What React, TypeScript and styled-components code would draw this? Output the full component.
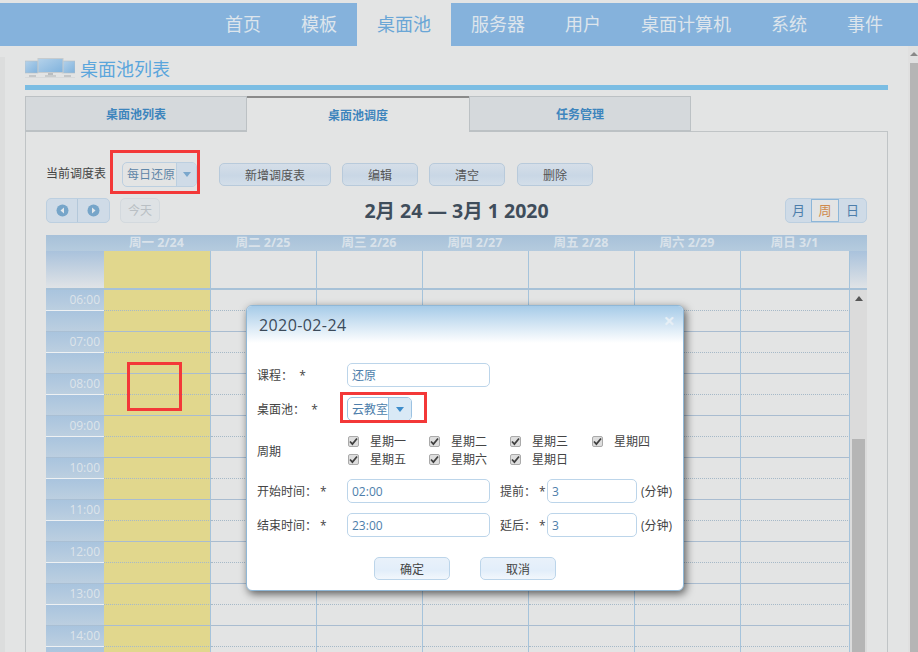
import React from "react";
import styled, { createGlobalStyle } from "styled-components";

const GlobalStyle = createGlobalStyle`
  html, body {
    margin: 0;
    padding: 0;
    background: #e3e4e4;
    font-family: "Open Sans", "Noto Sans CJK SC", sans-serif;
    font-size: 12px;
  }
  * {
    box-sizing: border-box;
  }
`;

const navItems = ["首页", "模板", "桌面池", "服务器", "用户", "桌面计算机", "系统", "事件"];
const days = ["周一 2/24", "周二 2/25", "周三 2/26", "周四 2/27", "周五 2/28", "周六 2/29", "周日 3/1"];
const hours = ["06:00", "07:00", "08:00", "09:00", "10:00", "11:00", "12:00", "13:00", "14:00"];
const weekdays = [
  ["星期一", "星期二", "星期三", "星期四"],
  ["星期五", "星期六", "星期日"],
];

const MonitorIcon = () => (
  <svg width="50" height="20" viewBox="0 0 50 20">
    <defs>
      <linearGradient id="screen" x1="0" y1="0" x2="1" y2="1">
        <stop offset="0" stopColor="#b5d2ea" />
        <stop offset="1" stopColor="#7fb2dd" />
      </linearGradient>
    </defs>
    <rect x="0" y="3" width="13" height="12" fill="url(#screen)" stroke="#b9bfc4" strokeWidth="0.6" />
    <rect x="37" y="3" width="13" height="12" fill="url(#screen)" stroke="#b9bfc4" strokeWidth="0.6" />
    <rect x="4" y="17" width="7" height="2" fill="#c4c7c9" />
    <rect x="39" y="17" width="7" height="2" fill="#c4c7c9" />
    <rect x="13" y="0.5" width="25" height="14" fill="url(#screen)" stroke="#c6cbce" />
    <rect x="23" y="15" width="5" height="2" fill="#b9bdc0" />
    <rect x="20" y="17" width="11" height="2" fill="#c9cccd" />
    <rect x="0" y="19" width="50" height="1" fill="#d8dadb" />
  </svg>
);

const ArrowCircle = ({ left }: { left?: boolean }) => (
  <svg width="13" height="13" viewBox="0 0 13 13">
    <circle cx="6.5" cy="6.5" r="6" fill="#76a5c9" />
    <path d={left ? "M8 3.5v6L4.5 6.5z" : "M5 3.5v6l3.5-3z"} fill="#e3e8ec" />
  </svg>
);

const CheckMark = () => (
  <svg width="9" height="9" viewBox="0 0 9 9">
    <path d="M1 4.5l2.4 2.6L8 1.5" fill="none" stroke="#3f3f3f" strokeWidth="1.7" />
  </svg>
);

const App = (): JSX.Element => {
  return (
    <>
      <GlobalStyle />
      <Page>
        <TopNav>
          {navItems.map((item) => (
            <NavItem key={item} $active={item === "桌面池"}>
              {item}
            </NavItem>
          ))}
        </TopNav>
        <Body>
          <EdgeStrip />
          <Content>
            <TitleRow>
              <MonitorIcon />
              <PageTitle>桌面池列表</PageTitle>
            </TitleRow>
            <BlueRule />
            <Tabs>
              <Tab>桌面池列表</Tab>
              <Tab $active>桌面池调度</Tab>
              <Tab>任务管理</Tab>
            </Tabs>
            <Panel>
              <Toolbar>
                <ToolbarLabel>当前调度表</ToolbarLabel>
                <PlanSelect>
                  <PlanValue>每日还原</PlanValue>
                  <PlanArrow>
                    <Caret $color="#7aa7cc" />
                  </PlanArrow>
                </PlanSelect>
                <ToolButton $width={112} $gap={22}>新增调度表</ToolButton>
                <ToolButton $width={76} $gap={11}>编辑</ToolButton>
                <ToolButton $width={76} $gap={11}>清空</ToolButton>
                <ToolButton $width={76} $gap={12}>删除</ToolButton>
              </Toolbar>
              <CalendarBar>
                <BarSide>
                  <ButtonGroup>
                    <NavSquare>
                      <ArrowCircle left />
                    </NavSquare>
                    <NavSquare $last>
                      <ArrowCircle />
                    </NavSquare>
                  </ButtonGroup>
                  <TodayButton>今天</TodayButton>
                </BarSide>
                <RangeTitle>2月 24 — 3月 1 2020</RangeTitle>
                <BarSide $right>
                  <ButtonGroup>
                    <ViewButton $width={25}>月</ViewButton>
                    <ViewButton $width={28} $active>周</ViewButton>
                    <ViewButton $width={27}>日</ViewButton>
                  </ButtonGroup>
                </BarSide>
              </CalendarBar>
              <Calendar>
                <HeaderRow>
                  <span />
                  {days.map((day) => (
                    <HeaderCell key={day}>{day}</HeaderCell>
                  ))}
                  <span />
                </HeaderRow>
                <AllDayRow>
                  <AllDayAxis />
                  {days.map((day, i) => (
                    <AllDayCell key={day} $highlight={i === 0} />
                  ))}
                  <AllDayAxis />
                </AllDayRow>
                <SlotsArea>
                  <Slots>
                    {hours.map((hour) => (
                      <React.Fragment key={hour}>
                        <AxisCell $half>
                          <AxisTime>{hour}</AxisTime>
                        </AxisCell>
                        {days.map((day, i) => (
                          <SlotCell key={day} $highlight={i === 0} $half />
                        ))}
                        <AxisCell />
                        {days.map((day, i) => (
                          <SlotCell key={day} $highlight={i === 0} />
                        ))}
                      </React.Fragment>
                    ))}
                  </Slots>
                  <CalendarScroll>
                    <ScrollUp />
                    <ScrollThumb />
                  </CalendarScroll>
                </SlotsArea>
              </Calendar>
            </Panel>
          </Content>
          <PageScroll>
            <PageScrollUp />
            <PageScrollThumb />
          </PageScroll>
        </Body>

        <Modal>
          <ModalHeader>
            <ModalTitle>2020-02-24</ModalTitle>
            <ModalClose>×</ModalClose>
          </ModalHeader>
          <ModalBody>
            <FormRow>
              <FieldLabel>课程：  *</FieldLabel>
              <TextField $width={143} value="还原" readOnly />
            </FormRow>
            <FormRow $top={10}>
              <FieldLabel>桌面池：  *</FieldLabel>
              <PoolSelect>
                <PoolValue>云教室</PoolValue>
                <PoolArrow>
                  <Caret $color="#3c8ccb" />
                </PoolArrow>
              </PoolSelect>
            </FormRow>
            <CycleRow>
              <CycleLabel>周期</CycleLabel>
              <CycleList>
                {weekdays.map((line) => (
                  <CycleLine key={line[0]}>
                    {line.map((day) => (
                      <CycleItem key={day} $wide={day === "星期三"}>
                        <CheckBox>
                          <CheckMark />
                        </CheckBox>
                        {day}
                      </CycleItem>
                    ))}
                  </CycleLine>
                ))}
              </CycleList>
            </CycleRow>
            <FormRow $top={11}>
              <FieldLabel>开始时间： *</FieldLabel>
              <TextField $width={143} value="02:00" readOnly />
              <SideLabel>提前： *</SideLabel>
              <TextField $width={90} value="3" readOnly />
              <UnitLabel>(分钟)</UnitLabel>
            </FormRow>
            <FormRow $top={10}>
              <FieldLabel>结束时间： *</FieldLabel>
              <TextField $width={143} value="23:00" readOnly />
              <SideLabel>延后： *</SideLabel>
              <TextField $width={90} value="3" readOnly />
              <UnitLabel>(分钟)</UnitLabel>
            </FormRow>
            <ModalActions>
              <ActionButton>确定</ActionButton>
              <ActionButton>取消</ActionButton>
            </ModalActions>
          </ModalBody>
        </Modal>

        <Marker $x={110} $y={150} $w={90} $h={44} />
        <Marker $x={127} $y={362} $w={55} $h={49} />
        <Marker $x={340} $y={392} $w={87} $h={31} />
      </Page>
    </>
  );
};

export default App;

const Page = styled.div`
  position: relative;
  width: 918px;
  height: 652px;
  overflow: hidden;
  background: #e3e4e4;
  padding-top: 3px;
  border-top: 0;
`;

const TopNav = styled.nav`
  display: flex;
  justify-content: flex-end;
  height: 43px;
  padding-right: 15px;
  background: #85b2dc;
`;

const NavItem = styled.div<{ $active?: boolean }>`
  padding: 0 20px;
  font-size: 18px;
  line-height: 43px;
  color: ${(props) => (props.$active ? "#6aa6d6" : "#dde5ec")};
  background: ${(props) => (props.$active ? "#e3e4e4" : "transparent")};
`;

const Body = styled.div`
  display: flex;
`;

const EdgeStrip = styled.div`
  width: 5px;
  height: 600px;
  margin-top: 11px;
  background: #dcdddd;
`;

const Content = styled.div`
  width: 863px;
  margin-left: 20px;
`;

const TitleRow = styled.div`
  display: flex;
  align-items: center;
  gap: 5px;
  height: 39px;
  padding-top: 4px;
`;

const PageTitle = styled.h1`
  margin: 0;
  font-size: 18px;
  font-weight: 400;
  color: #5ba6dc;
`;

const BlueRule = styled.div`
  height: 5px;
  background: #7bbde3;
`;

const Tabs = styled.div`
  display: flex;
  margin-top: 6px;
  height: 36px;
`;

const Tab = styled.div<{ $active?: boolean }>`
  width: 222px;
  height: 36px;
  text-align: center;
  line-height: 36px;
  font-weight: 700;
  font-size: 12px;
  color: #3d85bd;
  background: ${(props) => (props.$active ? "#e3e4e4" : "#d5d9dc")};
  border: 1px solid #bcc1c4;
  border-width: ${(props) => (props.$active ? "2px 0 0 0" : "1px 1px 2px 1px")};
  border-top-color: ${(props) => (props.$active ? "#8a8a8a" : "#bcc1c4")};
  position: relative;
  z-index: 1;
`;

const Panel = styled.div`
  margin-top: -1px;
  height: 540px;
  padding: 30px 20px 0;
  border: 1px solid #c0c4c6;
`;

const Toolbar = styled.div`
  display: flex;
  align-items: center;
  height: 25px;
`;

const ToolbarLabel = styled.span`
  width: 76px;
  margin-top: -3px;
  font-size: 12px;
  color: #444;
`;

const PlanSelect = styled.div`
  display: flex;
  width: 75px;
  height: 25px;
  border: 1px solid #bccfe0;
  border-radius: 5px;
  overflow: hidden;
`;

const PlanValue = styled.span`
  width: 53px;
  padding-left: 4px;
  line-height: 24px;
  font-size: 12px;
  color: #5f86a8;
  white-space: nowrap;
`;

const PlanArrow = styled.span`
  flex: 1;
  display: flex;
  align-items: center;
  justify-content: center;
  background: #cfdbe7;
  border-left: 1px solid #bccfe0;
`;

const Caret = styled.i<{ $color: string }>`
  width: 0;
  height: 0;
  border-left: 4px solid transparent;
  border-right: 4px solid transparent;
  border-top: 5px solid ${(props) => props.$color};
`;

const ToolButton = styled.button<{ $width: number; $gap: number }>`
  width: ${(props) => props.$width}px;
  height: 23px;
  margin-left: ${(props) => props.$gap}px;
  padding: 1px 0 0;
  font: inherit;
  font-size: 12px;
  color: #555;
  border: 1px solid #b8cadb;
  border-radius: 5px;
  background: linear-gradient(#d5dee8, #c9d7e5 55%, #d3dee9);
`;

const CalendarBar = styled.div`
  display: grid;
  grid-template-columns: 1fr auto 1fr;
  grid-template-rows: 25px;
  align-items: center;
  height: 25px;
  margin-top: 11px;
`;

const BarSide = styled.div<{ $right?: boolean }>`
  display: flex;
  gap: 10px;
  justify-content: ${(props) => (props.$right ? "flex-end" : "flex-start")};
`;

const ButtonGroup = styled.div`
  display: flex;
  height: 25px;
  border: 1px solid #bccfe0;
  border-radius: 5px;
  background: #cfdbe7;
  overflow: hidden;
`;

const NavSquare = styled.span<{ $last?: boolean }>`
  display: flex;
  align-items: center;
  justify-content: center;
  width: 31px;
  border-right: ${(props) => (props.$last ? "0" : "1px solid #b4c8da")};
`;

const TodayButton = styled.span`
  width: 40px;
  height: 25px;
  line-height: 23px;
  text-align: center;
  font-size: 12px;
  color: #b9bfc4;
  background: #dee2e5;
  border: 1px solid #d3d9de;
  border-radius: 5px;
`;

const RangeTitle = styled.h2`
  margin: 0;
  font-size: 19.5px;
  line-height: 25px;
  font-weight: 700;
  color: #3f4d5b;
  white-space: nowrap;
`;

const ViewButton = styled.span<{ $width: number; $active?: boolean }>`
  width: ${(props) => props.$width}px;
  text-align: center;
  line-height: 23px;
  font-size: 13px;
  color: ${(props) => (props.$active ? "#cf8a4c" : "#4d7eab")};
  background: ${(props) => (props.$active ? "#e3e4e4" : "transparent")};
  box-shadow: ${(props) => (props.$active ? "inset 0 0 0 1px #8db6d8" : "none")};
`;

const Calendar = styled.div`
  margin-top: 12px;
  width: 821px;
`;

const dayColumns = "107px repeat(5, 106px) 109px";

const HeaderRow = styled.div`
  display: grid;
  grid-template-columns: 58px ${dayColumns} 17px;
  height: 16px;
  background: linear-gradient(#a7c1d9, #b5cbde);
`;

const HeaderCell = styled.div`
  padding-right: 2px;
  text-align: center;
  font-size: 12.5px;
  font-weight: 700;
  line-height: 16px;
  color: #d9e2ea;
`;

const AllDayRow = styled.div`
  display: grid;
  grid-template-columns: 58px ${dayColumns} 17px;
  height: 39px;
  border-bottom: 2px solid #a7c1d7;
`;

const AllDayAxis = styled.div`
  background: linear-gradient(#a9c2dc, #e0e3e6);
`;

const AllDayCell = styled.div<{ $highlight?: boolean }>`
  background: ${(props) => (props.$highlight ? "#e1d78d" : "#e3e4e4")};
  border-right: 1px solid #a5c3db;
`;

const SlotsArea = styled.div`
  display: flex;
`;

const Slots = styled.div`
  display: grid;
  grid-template-columns: 58px ${dayColumns};
  grid-auto-rows: 21px;
  width: 804px;
`;

const AxisCell = styled.div<{ $half?: boolean }>`
  display: flex;
  align-items: center;
  justify-content: flex-end;
  padding: 0 4px 2px 0;
  background: linear-gradient(#a9c4de, #bccfe0);
  border-bottom: 1px solid ${(props) => (props.$half ? "#eef1f3" : "#a9bfd4")};
`;

const AxisTime = styled.span`
  font-size: 12px;
  color: #dde4ea;
`;

const SlotCell = styled.div<{ $highlight?: boolean; $half?: boolean }>`
  background: ${(props) => (props.$highlight ? "#e1d78d" : "#e3e4e4")};
  border-right: 1px solid #a5c3db;
  border-bottom: 1px ${(props) => (props.$half ? "dotted #a6b9c8" : "solid #a9bcd0")};
`;

const CalendarScroll = styled.div`
  width: 17px;
  padding: 0 2px;
  background: #dbdbdb;
`;

const ScrollUp = styled.div`
  width: 0;
  height: 0;
  margin: 6px auto 0;
  border-left: 4px solid transparent;
  border-right: 4px solid transparent;
  border-bottom: 5px solid #555;
`;

const ScrollThumb = styled.div`
  height: 240px;
  margin-top: 138px;
  background: #b5b5b5;
`;

const PageScroll = styled.div`
  width: 10px;
  margin-left: 20px;
  height: 606px;
  padding-left: 2px;
  background: #e0e0e0;
`;

const PageScrollUp = styled.div`
  width: 0;
  height: 0;
  margin: 6px 0 0 0;
  border-left: 4px solid transparent;
  border-right: 4px solid transparent;
  border-bottom: 4px solid #888;
`;

const PageScrollThumb = styled.div`
  height: 600px;
  margin-top: 7px;
  background: #b5b5b5;
`;

const Modal = styled.div`
  position: absolute;
  left: 246px;
  top: 305px;
  width: 438px;
  height: 286px;
  border: 1px solid #8fb7d6;
  border-radius: 6px;
  background: #fff;
  box-shadow: 2px 3px 8px rgba(0, 0, 0, 0.6);
  overflow: hidden;
`;

const ModalHeader = styled.div`
  display: flex;
  align-items: center;
  justify-content: space-between;
  height: 37px;
  padding: 0 8px 0 12px;
  background: linear-gradient(#a6cbe8, #fff);
`;

const ModalTitle = styled.h3`
  margin: 0;
  font-size: 16px;
  font-weight: 400;
  letter-spacing: 0.4px;
  color: #3b4a5a;
`;

const ModalClose = styled.span`
  font-size: 20px;
  font-weight: 700;
  line-height: 20px;
  margin-top: -8px;
  color: #e6eff6;
`;

const ModalBody = styled.div`
  padding: 20px 0 0 10px;
`;

const FormRow = styled.div<{ $top?: number }>`
  display: flex;
  align-items: center;
  height: 24px;
  margin-top: ${(props) => props.$top ?? 0}px;
`;

const FieldLabel = styled.label`
  width: 90px;
  font-size: 12px;
  white-space: pre;
  color: #444;
`;

const CycleLabel = styled(FieldLabel)`
  margin-top: 2px;
`;

const TextField = styled.input<{ $width: number }>`
  width: ${(props) => props.$width}px;
  height: 24px;
  padding: 0 4px;
  font: inherit;
  font-size: 12px;
  color: #4d7eab;
  border: 1px solid #bcd5ea;
  border-radius: 5px;
  outline: none;
`;

const SideLabel = styled.label`
  width: 47px;
  margin-left: 10px;
  font-size: 12px;
  white-space: pre;
  color: #444;
`;

const UnitLabel = styled.span`
  margin-left: 4px;
  font-size: 12px;
  color: #444;
`;

const PoolSelect = styled.div`
  display: flex;
  width: 65px;
  height: 24px;
  border: 1px solid #9cc2e2;
  border-radius: 5px;
  overflow: hidden;
`;

const PoolValue = styled.span`
  width: 40px;
  padding-left: 4px;
  line-height: 24px;
  font-size: 12px;
  color: #4d7eab;
  white-space: nowrap;
  overflow: hidden;
`;

const PoolArrow = styled.span`
  flex: 1;
  display: flex;
  align-items: center;
  justify-content: center;
  background: #d9e9f6;
  border-left: 1px solid #9cc2e2;
`;

const CycleRow = styled.div`
  display: flex;
  align-items: center;
  margin-top: 11px;
`;

const CycleList = styled.div`
  display: flex;
  flex-direction: column;
`;

const CycleLine = styled.div`
  display: flex;
  height: 18px;
`;

const CycleItem = styled.div<{ $wide?: boolean }>`
  display: flex;
  align-items: center;
  width: ${(props) => (props.$wide ? "82px" : "81px")};
  padding-left: 1px;
  font-size: 12px;
  color: #444;
`;

const CheckBox = styled.span`
  display: flex;
  align-items: center;
  justify-content: center;
  width: 11px;
  height: 11px;
  margin-right: 11px;
  background: #dedede;
  border: 1px solid #aaa;
  border-radius: 2px;
`;

const ModalActions = styled.div`
  display: flex;
  gap: 30px;
  margin-top: 20px;
  padding-left: 117px;
`;

const ActionButton = styled.button`
  width: 76px;
  height: 23px;
  padding: 0;
  font: inherit;
  font-size: 12px;
  color: #444;
  border: 1px solid #bcd5ea;
  border-radius: 5px;
  background: linear-gradient(#e9f1fa, #e2eefa 60%, #f2f7fc);
`;

const Marker = styled.div<{ $x: number; $y: number; $w: number; $h: number }>`
  position: absolute;
  left: ${(props) => props.$x}px;
  top: ${(props) => props.$y}px;
  width: ${(props) => props.$w}px;
  height: ${(props) => props.$h}px;
  border: 3px solid #f33838;
`;
